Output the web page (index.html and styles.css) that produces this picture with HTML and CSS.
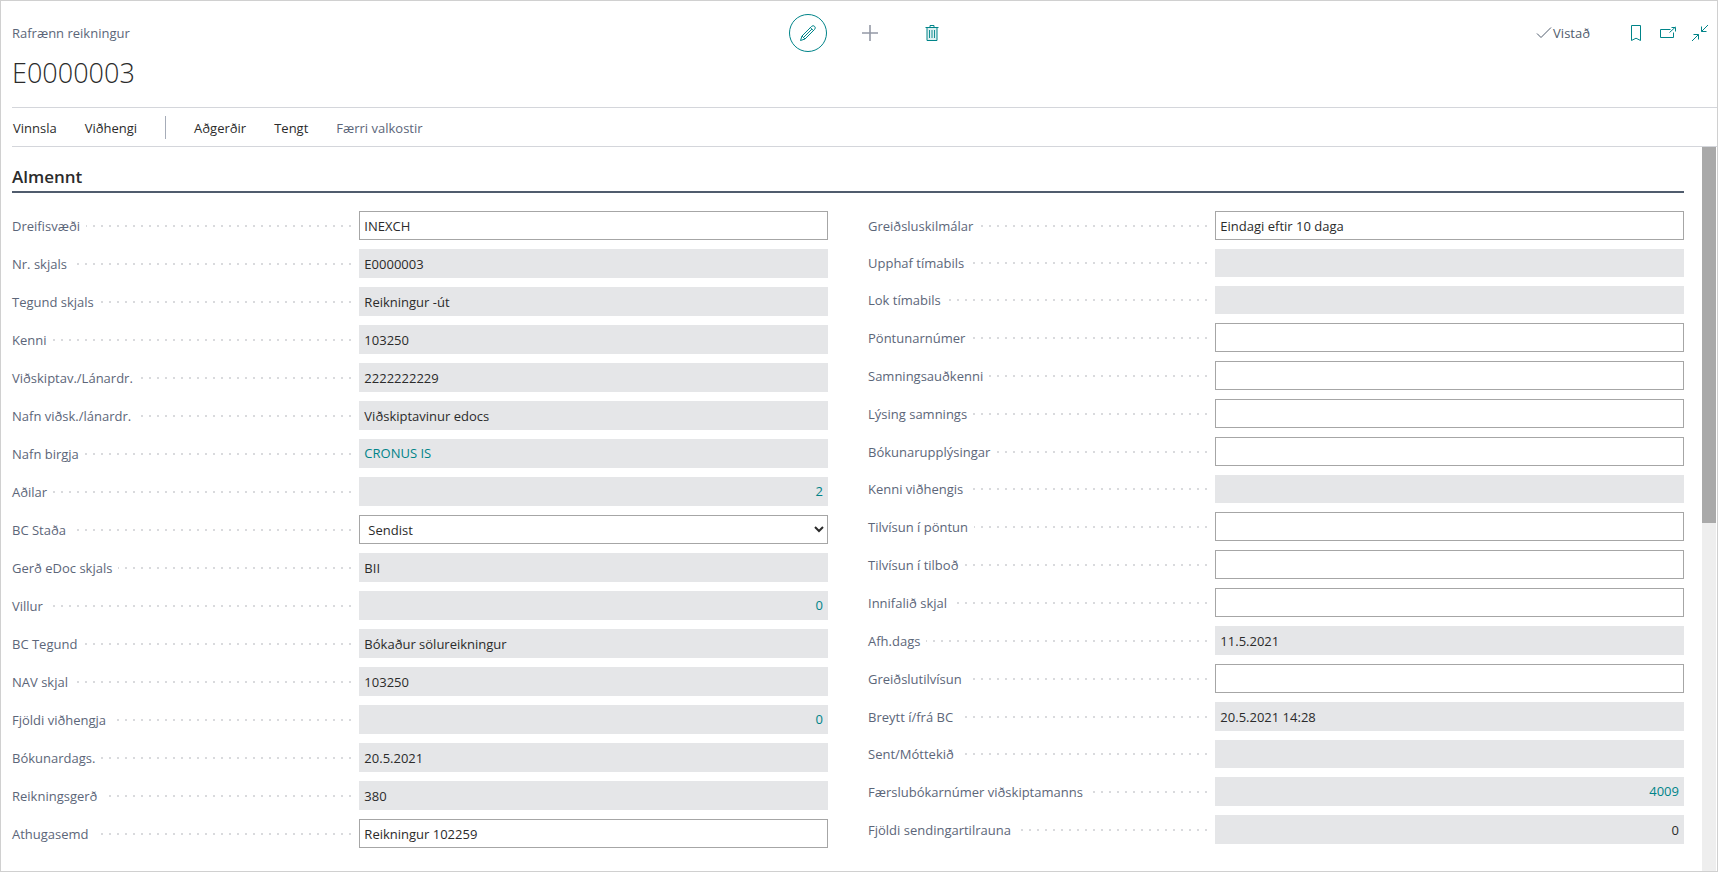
FILE: index.html
```html
<!DOCTYPE html>
<html lang="is">
<head>
<meta charset="utf-8">
<meta name="viewport" content="width=device-width, initial-scale=1">
<title>Rafrænn reikningur - E0000003</title>
<link rel="stylesheet" href="styles.css">
</head>
<body>
<div class="page">
  <header class="page-header">
    <span class="caption">Rafrænn reikningur</span>
    <div class="record-actions">
      <button type="button" class="icon-button icon-button-round" aria-label="Breyta">
        <svg width="18" height="18" viewBox="0 0 18 18"><path d="M1.500 16.500 3 12 12.600 2.400a2 2 0 0 1 3 3L6 15zM11.400 3.600l3 3M3 12l3 3M4.600 13.400l8.300-8.300"/></svg>
      </button>
      <button type="button" class="icon-button icon-button-muted" aria-label="Nýtt">
        <svg width="18" height="18" viewBox="0 0 18 18"><path d="M9 1v16M1 9h16" stroke-width="1.600"/></svg>
      </button>
      <button type="button" class="icon-button" aria-label="Eyða">
        <svg width="18" height="18" viewBox="0 0 18 18"><path d="M4 4h10v12.500H4z" fill="#dff0f1" stroke="none"/><path d="M2.500 3.500h13M7 3.500v-2h4v2M4 3.500v13h10v-13"/><path d="M6.500 6v8M9 6v8M11.500 6v8" stroke-width="0.900"/></svg>
      </button>
    </div>
    <div class="page-tools">
      <span class="save-state"><svg width="16" height="14" viewBox="0 0 16 14"><path d="M1 7.500l4 4L15 1.500"/></svg>Vistað</span>
      <button type="button" class="tool-button" aria-label="Bókamerki">
        <svg width="18" height="18" viewBox="0 0 18 18"><path d="M4.500 1.500h9v15L9 14.200l-4.500 2.300z"/></svg>
      </button>
      <button type="button" class="tool-button" aria-label="Opna í nýjum glugga">
        <svg width="18" height="18" viewBox="0 0 18 18"><path d="M11.500 5.500h-10v8h13V8.500M10.500 8.500l6-5.500M12.500 3.500h4v4"/></svg>
      </button>
      <button type="button" class="tool-button" aria-label="Minnka">
        <svg width="18" height="18" viewBox="0 0 18 18"><path d="M1 17l6.500-6.500M2.500 10.500h5v5M17 1l-6.500 6.500M10.500 2.500v5h5"/></svg>
      </button>
    </div>
  </header>
  <h1 class="title">E0000003</h1>
  <nav class="action-bar">
    <button type="button">Vinnsla</button>
    <button type="button">Viðhengi</button>
    <span class="divider"></span>
    <button type="button">Aðgerðir</button>
    <button type="button">Tengt</button>
    <button type="button" class="muted">Færri valkostir</button>
  </nav>
  <div class="scroll-area">
    <main class="content">
      <h2 class="section-title">Almennt</h2>
      <form class="columns">
        <div class="column">
          <div class="row"><label for="l1">Dreifisvæði</label><input id="l1" class="field" value="INEXCH"></div>
          <div class="row"><label for="l2">Nr. skjals</label><input id="l2" class="field readonly" value="E0000003" readonly></div>
          <div class="row"><label for="l3">Tegund skjals</label><input id="l3" class="field readonly" value="Reikningur -út" readonly></div>
          <div class="row"><label for="l4">Kenni</label><input id="l4" class="field readonly" value="103250" readonly></div>
          <div class="row"><label for="l5">Viðskiptav./Lánardr.</label><input id="l5" class="field readonly" value="2222222229" readonly></div>
          <div class="row"><label for="l6">Nafn viðsk./lánardr.</label><input id="l6" class="field readonly" value="Viðskiptavinur edocs" readonly></div>
          <div class="row"><span class="label" id="l7">Nafn birgja</span><a href="#" class="field readonly link" aria-describedby="l7">CRONUS IS</a></div>
          <div class="row"><span class="label" id="l8">Aðilar</span><a href="#" class="field readonly link number" aria-describedby="l8">2</a></div>
          <div class="row"><label for="l9">BC Staða</label><select id="l9" class="field"><option>Sendist</option></select></div>
          <div class="row"><label for="l10">Gerð eDoc skjals</label><input id="l10" class="field readonly" value="BII" readonly></div>
          <div class="row"><span class="label" id="l11">Villur</span><a href="#" class="field readonly link number" aria-describedby="l11">0</a></div>
          <div class="row"><label for="l12">BC Tegund</label><input id="l12" class="field readonly" value="Bókaður sölureikningur" readonly></div>
          <div class="row"><label for="l13">NAV skjal</label><input id="l13" class="field readonly" value="103250" readonly></div>
          <div class="row"><span class="label" id="l14">Fjöldi viðhengja</span><a href="#" class="field readonly link number" aria-describedby="l14">0</a></div>
          <div class="row"><label for="l15">Bókunardags.</label><input id="l15" class="field readonly" value="20.5.2021" readonly></div>
          <div class="row"><label for="l16">Reikningsgerð</label><input id="l16" class="field readonly" value="380" readonly></div>
          <div class="row"><label for="l17">Athugasemd</label><input id="l17" class="field" value="Reikningur 102259"></div>
        </div>
        <div class="column">
          <div class="row"><label for="r1">Greiðsluskilmálar</label><input id="r1" class="field" value="Eindagi eftir 10 daga"></div>
          <div class="row"><label for="r2">Upphaf tímabils</label><input id="r2" class="field readonly empty" readonly></div>
          <div class="row"><label for="r3">Lok tímabils</label><input id="r3" class="field readonly empty" readonly></div>
          <div class="row"><label for="r4">Pöntunarnúmer</label><input id="r4" class="field"></div>
          <div class="row"><label for="r5">Samningsauðkenni</label><input id="r5" class="field"></div>
          <div class="row"><label for="r6">Lýsing samnings</label><input id="r6" class="field"></div>
          <div class="row"><label for="r7">Bókunarupplýsingar</label><input id="r7" class="field"></div>
          <div class="row"><label for="r8">Kenni viðhengis</label><input id="r8" class="field readonly empty" readonly></div>
          <div class="row"><label for="r9">Tilvísun í pöntun</label><input id="r9" class="field"></div>
          <div class="row"><label for="r10">Tilvísun í tilboð</label><input id="r10" class="field"></div>
          <div class="row"><label for="r11">Innifalið skjal</label><input id="r11" class="field"></div>
          <div class="row"><label for="r12">Afh.dags</label><input id="r12" class="field readonly" value="11.5.2021" readonly></div>
          <div class="row"><label for="r13">Greiðslutilvísun</label><input id="r13" class="field"></div>
          <div class="row"><label for="r14">Breytt í/frá BC</label><input id="r14" class="field readonly" value="20.5.2021 14:28" readonly></div>
          <div class="row"><label for="r15">Sent/Móttekið</label><input id="r15" class="field readonly empty" readonly></div>
          <div class="row"><span class="label" id="r16">Færslubókarnúmer viðskiptamanns</span><a href="#" class="field readonly link number" aria-describedby="r16">4009</a></div>
          <div class="row"><label for="r17">Fjöldi sendingartilrauna</label><input id="r17" class="field readonly number" value="0" readonly></div>
        </div>
      </form>
    </main>
    <div class="scrollbar"><div class="scrollbar-thumb"></div></div>
  </div>
</div>
</body>
</html>
```

FILE: styles.css
```css
* {
  box-sizing: border-box;
}

body {
  margin: 0;
  color: #2b2b2b;
  background: #fff;
  font: 13px/20px "Open Sans", "Noto Sans", sans-serif;
}

button,
input,
select {
  margin: 0;
  color: inherit;
  font: inherit;
}

button {
  padding: 0;
  border: 0;
  background: none;
}

svg {
  display: block;
  fill: none;
  stroke: currentColor;
}

.page {
  display: flex;
  flex-direction: column;
  min-height: 100vh;
  padding-left: 11px;
  border: 1px solid #d0d0d0;
}

/* Header */
.page-header {
  display: grid;
  grid-template-columns: 1fr auto 1fr;
  align-items: center;
  padding: 13px 1px 0 0;
}

.caption {
  color: #5c6679;
}

.record-actions {
  display: flex;
  gap: 24px;
  margin-left: 11px;
  color: #008489;
}

.icon-button {
  display: grid;
  place-items: center;
  width: 38px;
  height: 38px;
}

.icon-button-round {
  border: 1px solid #008489;
  border-radius: 50%;
}

.icon-button-muted {
  color: #9499a6;
}

.page-tools {
  display: flex;
  justify-content: flex-end;
  align-items: center;
  color: #008489;
}

.save-state {
  display: flex;
  align-items: center;
  gap: 1px;
  margin-right: 30px;
  color: #505c6d;
}

.tool-button {
  display: grid;
  place-items: center;
  width: 32px;
  height: 32px;
}

.title {
  margin: 1px 0 14px;
  font-size: 27px;
  font-weight: 300;
  line-height: 40px;
}

/* Action bar */
.action-bar {
  display: flex;
  align-items: center;
  gap: 28px;
  height: 40px;
  padding-left: 1px;
  border-top: 1px solid #d4d6db;
  border-bottom: 1px solid #d4d6db;
}

.action-bar button {
  padding-top: 2px;
}

.divider {
  width: 1px;
  height: 23px;
  background: #a6acb8;
}

.muted {
  color: #5c6679;
}

/* Scrolling body */
.scroll-area {
  display: flex;
  flex: 1;
}

.content {
  flex: 1;
  padding-right: 18px;
}

.section-title {
  margin: 0 0 18px;
  padding: 18px 0 2px;
  border-bottom: 2px solid #505c6d;
  font-size: 17px;
  font-weight: 600;
  line-height: 24px;
}

.columns {
  display: grid;
  grid-template-columns: 1fr 1fr;
  gap: 40px;
}

.column {
  display: flex;
  flex-direction: column;
  gap: 9px;
}

.row {
  display: grid;
  grid-template-columns: 42fr 58fr;
  gap: 8px;
  align-items: center;
}

.row label,
.label {
  display: flex;
  align-items: center;
  gap: 6px;
  color: #5c6679;
  white-space: nowrap;
}

/* Dotted leader between a caption and its field */
.row label::after,
.label::after {
  content: "";
  flex: 1;
  height: 2px;
  background: repeating-linear-gradient(to left, #d9dadd 0 2px, transparent 2px 8px);
}

.field {
  width: 100%;
  height: 29px;
  padding: 0 4px;
  border: 1px solid #a6a6a6;
  border-radius: 0;
  background: #fff;
  line-height: 27px;
}

.readonly {
  border-color: #e5e6e8;
  background: #e5e6e8;
}

.empty {
  height: 28px;
}

.number {
  text-align: right;
}

.link {
  color: #008489;
  text-decoration: none;
}

.scrollbar {
  width: 15px;
  border-right: 1px solid #fff;
  background: #eee;
}

.scrollbar-thumb {
  height: 52%;
  background: #a9a9a9;
}
```
